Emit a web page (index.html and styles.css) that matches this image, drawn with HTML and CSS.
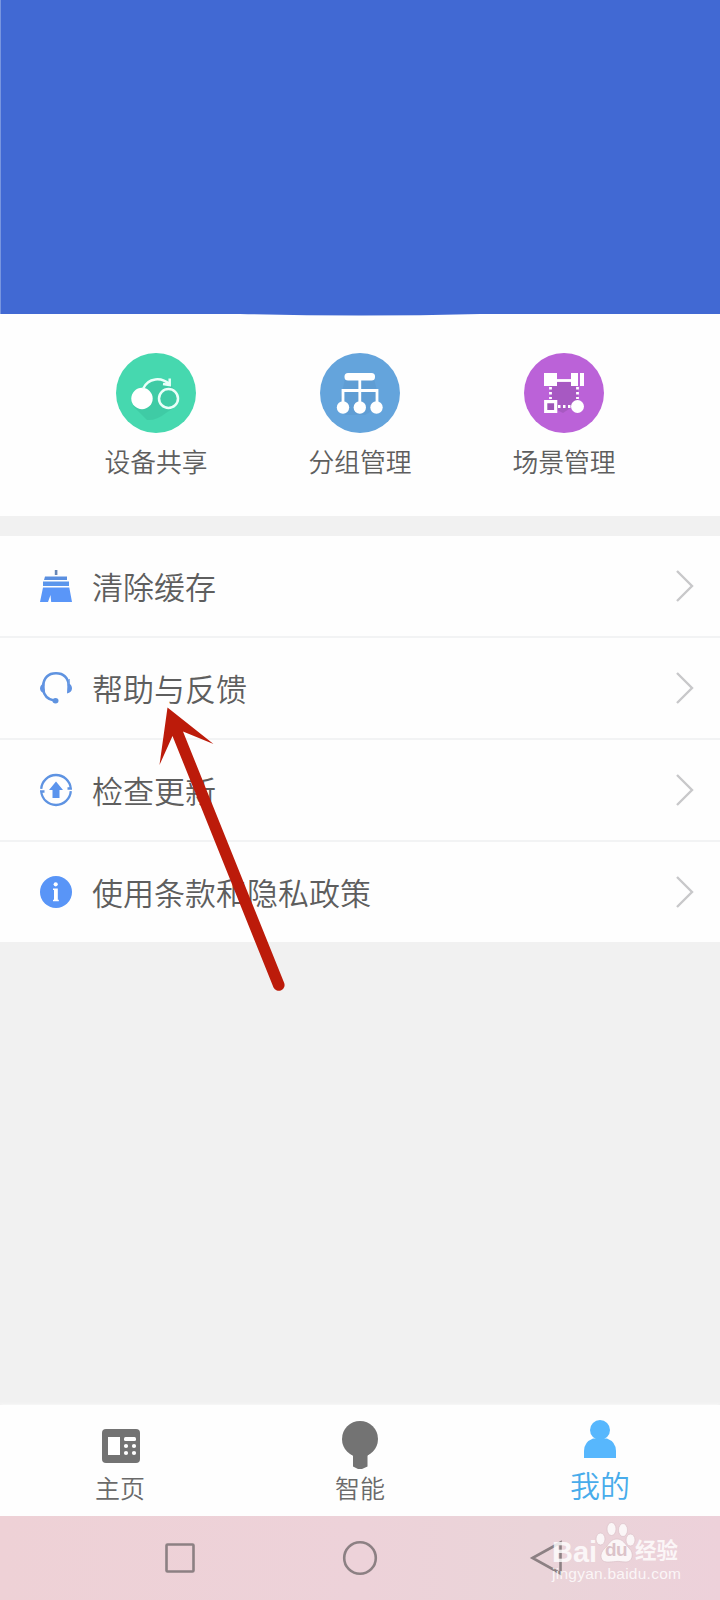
FILE: index.html
```html
<!DOCTYPE html>
<html lang="zh-CN">
<head>
<meta charset="utf-8">
<title>我的</title>
<link rel="stylesheet" href="styles.css">
</head>
<body>
<div class="screen">
  <header class="banner">
    <svg class="banner-curve" width="240" height="2" viewBox="0 0 240 2"><path d="M0 0H240Q120 3 0 0Z" fill="#4169d3"/></svg>
  </header>

  <section class="shortcuts">
    <a class="shortcut">
      <svg width="80" height="80" viewBox="0 0 80 80">
        <circle cx="40" cy="40" r="40" fill="#46d8af"/>
        <path d="M17 53L31 67Q40 68 50 60L62 52L60 38L53 30Q40 22 30 32Z" fill="#3cc5a0" opacity=".65"/>
        <circle cx="26" cy="45.500" r="10.700" fill="#fff"/>
        <circle cx="52.500" cy="45.500" r="9.500" fill="none" stroke="#eafff9" stroke-width="2.500"/>
        <path d="M27 36C32 24 46 24 53.500 31.500M53.700 25.500V32L47 31" fill="none" stroke="#eafff9" stroke-width="2.500"/>
      </svg>
      <span>设备共享</span>
    </a>
    <a class="shortcut">
      <svg width="80" height="80" viewBox="0 0 80 80">
        <circle cx="40" cy="40" r="40" fill="#64a4dc"/>
        <path d="M25 26H54L57 38V55L45 62H25L20 47Z" fill="#5b99cf" opacity=".6"/>
        <rect x="24.500" y="20" width="30.500" height="7.500" rx="3.500" fill="#fff"/>
        <path d="M39.800 27V52M23 52V37.500H57V52" fill="none" stroke="#fff" stroke-width="2.800"/>
        <g fill="#fff"><circle cx="23" cy="54.500" r="6.200"/><circle cx="39.800" cy="54.500" r="6.200"/><circle cx="56.500" cy="54.500" r="6.200"/></g>
      </svg>
      <span>分组管理</span>
    </a>
    <a class="shortcut">
      <svg width="80" height="80" viewBox="0 0 80 80">
        <circle cx="40" cy="40" r="40" fill="#bb62d8"/>
        <path d="M26 32L34 29H46L54 35V50L39 60L27 54Z" fill="#a358bd" opacity=".8"/>
        <path d="M20 20h13v13H20zM47 20h7v13h-7zM56 20h4v13h-4z" fill="#fff"/>
        <path d="M33 27.500H47" stroke="#fff" stroke-width="2.800"/>
        <path d="M26.500 34V46M53.500 34V46M34 53.500H47" fill="none" stroke="#fff" stroke-width="2.800" stroke-dasharray="2.500 2.500"/>
        <path d="M21.700 48.700h10v9.800h-10z" fill="#9d55b7" stroke="#fff" stroke-width="3.200"/>
        <circle cx="53.500" cy="53.500" r="6.500" fill="#fff"/>
      </svg>
      <span>场景管理</span>
    </a>
  </section>

  <main class="menu">
    <a class="row">
      <svg class="row-icon" width="32" height="32" viewBox="0 0 32 32">
        <path d="M14.800 0h2.600v5h-2.600z" fill="#6686b6"/>
        <path d="M5 6.500H27V10H4Z" fill="#5a8fe0"/>
        <path d="M3 11.500H29V16H3Z" fill="#5b96ec"/>
        <path d="M3 17.500H29.300L32 32H11.200L10.500 25L8 32H0Z" fill="#5a96f8"/>
      </svg>
      <span class="row-label">清除缓存</span>
      <svg class="chevron" width="18" height="32" viewBox="0 0 18 32"><path d="M1 1L16 16L1 31"/></svg>
    </a>
    <a class="row">
      <svg class="row-icon" width="32" height="32" viewBox="0 0 32 32">
        <path d="M3 14C4 5 9 1.300 16 1.300S28 5 29 14M3 17C4 24 8 27.500 14 28.500" fill="none" stroke="#5f93e0" stroke-width="2.500"/>
        <path d="M4.500 11C1.500 12 0 14 0 16.500S2 21 5 21.500ZM27.500 11C31 12 32 14 32 16.500S30 21 27 21.500Z" fill="#6193e2"/>
        <path d="M29.200 7V12" stroke="#7ca7e8" stroke-width="1.300"/>
        <ellipse cx="15.500" cy="28.700" rx="3" ry="2.700" fill="#5f93e0"/>
      </svg>
      <span class="row-label">帮助与反馈</span>
      <svg class="chevron" width="18" height="32" viewBox="0 0 18 32"><path d="M1 1L16 16L1 31"/></svg>
    </a>
    <a class="row">
      <svg class="row-icon" width="32" height="32" viewBox="0 0 32 32">
        <path d="M1.200 14.800A14.850 14.850 0 0 1 30.800 14.500H27.500M30.800 17.200A14.850 14.850 0 0 1 1.200 17.500H4.500" fill="none" stroke="#5e93e2" stroke-width="2.300"/>
        <path d="M16 7.500L23 16H19.500V24H12.500V16H9Z" fill="#5b94ed"/>
      </svg>
      <span class="row-label">检查更新</span>
      <svg class="chevron" width="18" height="32" viewBox="0 0 18 32"><path d="M1 1L16 16L1 31"/></svg>
    </a>
    <a class="row">
      <svg class="row-icon" width="32" height="32" viewBox="0 0 32 32">
        <circle cx="16" cy="16" r="16" fill="#5995f7"/>
        <circle cx="15.700" cy="8.300" r="2.100" fill="#fff"/>
        <path d="M13 12.500H17.800V23.800H18.800V25.200H13V23.800H14V14H13Z" fill="#fff"/>
      </svg>
      <span class="row-label">使用条款和隐私政策</span>
      <svg class="chevron" width="18" height="32" viewBox="0 0 18 32"><path d="M1 1L16 16L1 31"/></svg>
    </a>
  </main>

  <nav class="tabs">
    <a class="tab">
      <svg width="36" height="48" viewBox="0 0 36 48">
        <rect y="8" width="38" height="34" rx="4" fill="#737373"/>
        <path d="M6 16h12v18H6z" fill="#fff"/>
        <rect x="22" y="16" width="12" height="4" rx="1.500" fill="#fff"/>
        <g fill="#fff"><circle cx="24" cy="25" r="2.100"/><circle cx="32" cy="25" r="2.100"/><circle cx="24" cy="32" r="2.100"/><circle cx="32" cy="32" r="2.100"/></g>
      </svg>
      <span>主页</span>
    </a>
    <a class="tab">
      <svg width="38" height="48" viewBox="0 0 38 48"><circle cx="19" cy="18" r="18" fill="#737373"/><path d="M9 32H29L26.500 34.500V45.500L21 48H17L12 45.500V34.500Z" fill="#737373"/></svg>
      <span>智能</span>
    </a>
    <a class="tab tab-active">
      <svg width="38" height="48" viewBox="0 0 38 48"><circle cx="19" cy="9" r="10" fill="#57b7fd"/><path d="M3 37V30Q3 21 12 17.500H26Q35 21 35 30V37Z" fill="#57b7fd"/></svg>
      <span>我的</span>
    </a>
  </nav>

  <footer class="system-bar">
    <svg width="36" height="36" viewBox="0 0 36 36"><rect x="4.500" y="4.500" width="27" height="27" rx="1"/></svg>
    <svg width="36" height="36" viewBox="0 0 36 36"><circle cx="18" cy="18" r="15.800"/></svg>
    <svg width="36" height="36" viewBox="0 0 36 36"><path d="M3.500 18L31.500 2.500V33.500Z"/></svg>
  </footer>

  <svg class="pointer" width="130" height="290" viewBox="0 0 130 290">
    <path d="M8.500 0.500L54.500 37L24 24.500L125 275.500A5.500 5.500 0 0 1 114.500 280.500L13.500 29L0.500 58Z" fill="#bc1b0a"/>
  </svg>

  <div class="watermark">
    <div class="brand">
      <span class="brand-latin">Bai</span>
      <span class="paw">
        <svg width="38" height="42" viewBox="0 0 38 42">
          <g fill="#fff" stroke="#d9bfc5" stroke-width=".7"><ellipse cx="2.500" cy="17" rx="4.500" ry="6"/><ellipse cx="13.500" cy="7" rx="4.500" ry="6.500"/><ellipse cx="25" cy="8" rx="4.500" ry="6.500"/><ellipse cx="32.500" cy="18" rx="4.500" ry="6"/><path d="M19 17C25 17 27 22 31 26C37 32 34 40 28 40C23 40 21 39 18 39.500C12 40 7 41 4 38C1 32 5 28 9 24C12 20 14 17 19 17Z"/></g>
        </svg>
        <b>du</b>
      </span>
      <span class="brand-cn">经验</span>
    </div>
    <div class="site">jingyan.baidu.com</div>
  </div>
</div>
</body>
</html>
```
FILE: styles.css
```css
* { box-sizing: border-box; }
body {
  margin: 0;
  font-family: "Noto Sans CJK SC", sans-serif;
  font-weight: 350;
  color: #5e5e5e;
}
svg { display: block; overflow: visible; }

.screen {
  position: relative;
  width: 720px;
  height: 1600px;
  display: flex;
  flex-direction: column;
  background: #f1f1f1;
  overflow: hidden;
}

.banner {
  position: relative;
  height: 314px;
  flex: none;
  background: #4169d3;
  border-left: 1px solid #7895df;
}
.banner-curve { position: absolute; left: 239px; top: 314px; }

.shortcuts {
  height: 202px;
  flex: none;
  display: flex;
  justify-content: center;
  padding-top: 39px;
  background: #fefefe;
}
.shortcut {
  width: 204px;
  display: flex;
  flex-direction: column;
  align-items: center;
  gap: 10px;
  font-size: 25.8px;
  line-height: 36px;
}

.menu { margin-top: 20px; flex: none; background: #fefefe; }
.row {
  height: 102px;
  display: flex;
  align-items: center;
  padding: 0 26px 0 40px;
  border-bottom: 2px solid #f2f3f4;
}
.row:last-child { height: 100px; border-bottom: 0; }
.row-icon { flex: none; }
.row-label {
  flex: 1;
  margin-left: 20px;
  font-size: 31px;
  line-height: 44px;
  white-space: nowrap;
}
.chevron { fill: none; stroke: #c8c8ca; stroke-width: 2.4; }

.tabs {
  height: 111px;
  flex: none;
  margin-top: auto;
  display: flex;
  padding-top: 16px;
  background: #fefefe;
  box-shadow: 0 -1px 3px #f8f8f8;
}
.tab {
  flex: 1;
  display: flex;
  flex-direction: column;
  align-items: center;
  font-size: 25px;
  line-height: 36px;
  color: #6a6a6a;
}
.tab-active { font-size: 30px; line-height: 34px; color: #48aceb; }
.tab-active span { margin-top: -2px; }

.system-bar {
  height: 84px;
  flex: none;
  display: flex;
  justify-content: space-between;
  align-items: center;
  padding: 0 155px 0 162px;
  background: linear-gradient(90deg, #eed1d6, #edd2d9 50%, #ead4d9 75%, #edd1da);
}
.system-bar svg { fill: none; stroke: #8c8083; stroke-width: 2.6; }
.system-bar svg:nth-child(2) { position: relative; left: -3.5px; }

.pointer { position: absolute; left: 159px; top: 707px; }

.watermark {
  position: absolute;
  left: 552px;
  top: 1522px;
  width: 130px;
  color: #fff;
  opacity: .8;
  font-family: "Liberation Sans", "Noto Sans CJK SC", sans-serif;
}
.brand { display: flex; height: 42px; align-items: flex-end; }
.brand-latin {
  width: 46px;
  font-size: 29px;
  line-height: 24px;
  font-weight: 700;
}
.paw { position: relative; width: 36px; }
.paw b {
  position: absolute;
  left: 7px;
  top: 18px;
  font-size: 19px;
  line-height: 20px;
  font-weight: 700;
  letter-spacing: -.5px;
  color: #d9bfc6;
}
.brand-cn { font-size: 21.5px; line-height: 26px; font-weight: 700; white-space: nowrap; margin-left: 1px; }
.site { font-size: 15.5px; line-height: 20px; letter-spacing: .25px; font-weight: 400; white-space: nowrap; }
```
